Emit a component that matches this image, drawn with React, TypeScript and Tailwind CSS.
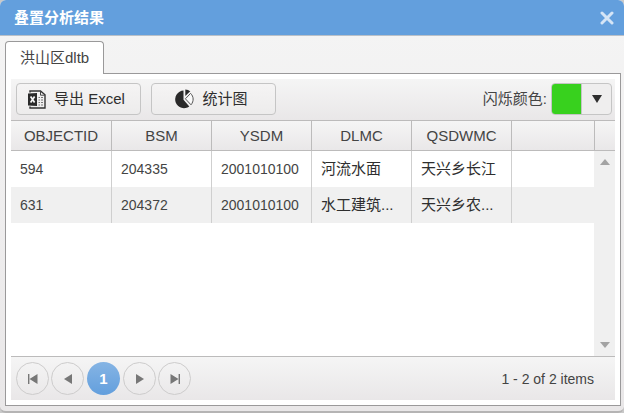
import { useState } from "react";

const columns = ["OBJECTID", "BSM", "YSDM", "DLMC", "QSDWMC"];

const rows = [
  ["594", "204335", "2001010100", "河流水面", "天兴乡长江"],
  ["631", "204372", "2001010100", "水工建筑...", "天兴乡农..."],
];

const pagerButton =
  "flex h-[33px] w-[33px] items-center justify-center rounded-full border border-[#cdcccc] text-[#777]";

const toolButton =
  "flex h-8 w-[125px] items-center justify-center gap-2 rounded border border-[#c5c5c5] bg-gradient-to-b from-[#f5f4f4] to-[#edecec] pr-1 text-[#2e2e2e]";

function ExcelIcon() {
  return (
    <svg width="18" height="19" viewBox="0 0 18 19" fill="none" aria-hidden="true">
      <path d="M2 2.5V1h10.5L17 4.8V18H2v-1.5" stroke="#333" strokeWidth="1.4" />
      <path d="M12.5 1v4.2H17" stroke="#444" />
      <path d="M0 3.5l9-.5v13l-9-.5z" fill="#2a2a2a" />
      <path d="M2.6 6.5l4 6M6.6 6.5l-4 6" stroke="#f5f5f5" strokeWidth="1.7" />
      <path d="M10.5 7.5H12M13 7.5h2M10.5 10H12M13 10h2M10.5 12.5H12M13 12.5h2M10.5 15H12M13 15h2" stroke="#777" />
    </svg>
  );
}

function PieIcon() {
  return (
    <svg width="19" height="20" viewBox="0 0 19 20" aria-hidden="true">
      <path d="M8.5 1.6v9.2l5.8 6.6A8.8 8.8 0 1 1 8.5 1.6z" fill="#2a2a2a" />
      <path d="M10.3 7V.4c2 .1 3.7.8 5 1.9z" fill="#2a2a2a" />
      <path d="M10.4 9.8l5.2-5.4c3.2 3.2 3.4 7.8.4 11.4z" fill="#fafafa" stroke="#555" />
    </svg>
  );
}

export default function App() {
  const [open, setOpen] = useState(true);

  if (!open) return null;

  return (
    <div className="bg-[#c9c9c9] font-['Liberation_Sans','Noto_Sans_CJK_SC',sans-serif] text-[15px] leading-5 text-[#444]">
      <section className="overflow-hidden rounded-md border-b-2 border-[#b5b4b4] bg-gradient-to-b from-[#f5f5f5] to-[#e9e7e8]">
        <header className="flex h-9 items-center justify-between border-b border-[#b9c0c8] bg-[#639fdd] pr-2.5 pl-3.5 text-white">
          <h1 className="font-bold">叠置分析结果</h1>
          <button type="button" aria-label="Close" onClick={() => setOpen(false)} className="text-[#d5e5f6]">
            <svg width="14" height="14" viewBox="0 0 14 14" aria-hidden="true">
              <path d="M2 2l10 10M12 2L2 12" stroke="currentColor" strokeWidth="3" strokeLinecap="round" />
            </svg>
          </button>
        </header>

        <div className="pt-[5px] pr-[3px] pb-[5px] pl-[5px]">
          {/* tabs */}
          <div role="tablist" className="flex">
            <button
              type="button"
              role="tab"
              aria-selected="true"
              className="relative -mb-px h-[33px] rounded-t border border-b-0 border-[#9a999a] bg-white px-3.5"
            >
              洪山区dltb
            </button>
          </div>

          <div role="tabpanel" className="border border-[#9a999a] bg-white p-[5px]">
            {/* toolbar */}
            <div className="flex h-[41px] items-start justify-between bg-gradient-to-b from-[#f5f5f5] to-[#e9e7e8] pt-1 pr-[3px] pl-[5px]">
              <div className="flex gap-2.5">
                <button type="button" className={toolButton}>
                  <ExcelIcon />
                  <span>导出 Excel</span>
                </button>
                <button type="button" className={toolButton}>
                  <PieIcon />
                  <span>统计图</span>
                </button>
              </div>
              <div className="flex items-center gap-1">
                <label htmlFor="flash-color">闪烁颜色:</label>
                <button
                  id="flash-color"
                  type="button"
                  className="flex h-8 w-[61px] overflow-hidden rounded border border-[#c5c5c5] bg-[#efeeee]"
                >
                  <span className="h-full w-[30px] border-r border-[#c5c5c5] bg-[#38d11e]" />
                  <span className="flex h-full flex-1 items-center justify-center">
                    <svg width="10" height="8" viewBox="0 0 10 8" aria-hidden="true">
                      <path d="M0 0h10L5 8z" fill="#2e2e2e" />
                    </svg>
                  </span>
                </button>
              </div>
            </div>

            {/* grid */}
            <div className="relative min-h-[236px] border-t border-[#bcbbbb]">
              <table className="w-full table-fixed border-separate border-spacing-0">
                <colgroup>
                  <col className="w-[101px]" />
                  <col className="w-[100px]" />
                  <col className="w-[100px]" />
                  <col className="w-[100px]" />
                  <col className="w-[100px]" />
                  <col />
                  <col className="w-[20px]" />
                </colgroup>
                <thead>
                  <tr className="h-[30px] bg-gradient-to-b from-[#f5f5f5] to-[#e9e7e8]">
                    {columns.map((name) => (
                      <th key={name} scope="col" className="border-r border-b border-[#bcbbbb] p-0 font-normal">
                        {name}
                      </th>
                    ))}
                    <td className="border-r border-b border-[#bcbbbb] p-0" />
                    <td className="border-b border-[#bcbbbb] p-0" />
                  </tr>
                </thead>
                <tbody>
                  {rows.map((row) => (
                    <tr key={row[0]} className="h-9 even:bg-[#f0f0f0]">
                      {row.map((cell, i) => (
                        <td
                          key={i}
                          className={`overflow-hidden border-r border-[#cfcfcf] py-0 pr-0 pl-[9px] whitespace-nowrap ${
                            i < 3 ? "text-sm" : "text-[#2e2e2e]"
                          }`}
                        >
                          {cell}
                        </td>
                      ))}
                      <td className="p-0" />
                      <td className="p-0" />
                    </tr>
                  ))}
                </tbody>
              </table>

              {/* scrollbar track */}
              <div className="absolute top-[30px] right-0 bottom-0 flex w-[21px] flex-col items-center justify-between bg-[#f0f0f0] py-2">
                <svg width="10" height="6" viewBox="0 0 10 6" aria-hidden="true">
                  <path d="M5 0l5 6H0z" fill="#a3a3a3" />
                </svg>
                <svg width="10" height="6" viewBox="0 0 10 6" aria-hidden="true">
                  <path d="M0 0h10L5 6z" fill="#a3a3a3" />
                </svg>
              </div>
            </div>

            {/* pager */}
            <div className="flex h-11 items-center justify-between border-t border-[#bcbbbb] bg-gradient-to-b from-[#f5f5f5] to-[#e9e7e8] pr-[21px] pl-[5px]">
              <nav aria-label="Pager" className="flex gap-0.5">
                <button type="button" aria-label="First page" className={pagerButton}>
                  <svg width="10" height="10" viewBox="0 0 10 10" fill="currentColor" aria-hidden="true">
                    <path d="M0 0h1.4v10H0zM9.5 0v10L1.5 5z" />
                  </svg>
                </button>
                <button type="button" aria-label="Previous page" className={pagerButton}>
                  <svg width="8" height="10" viewBox="0 0 8 10" fill="currentColor" aria-hidden="true">
                    <path d="M8 0v10L0 5z" />
                  </svg>
                </button>
                <button
                  type="button"
                  aria-current="page"
                  className="mx-px h-[33px] w-[33px] rounded-full bg-gradient-to-b from-[#85b4e4] to-[#639fdd] font-bold text-white"
                >
                  1
                </button>
                <button type="button" aria-label="Next page" className={pagerButton}>
                  <svg width="8" height="10" viewBox="0 0 8 10" fill="currentColor" aria-hidden="true">
                    <path d="M0 0l8 5-8 5z" />
                  </svg>
                </button>
                <button type="button" aria-label="Last page" className={pagerButton}>
                  <svg width="10" height="10" viewBox="0 0 10 10" fill="currentColor" aria-hidden="true">
                    <path d="M.5 0l8 5-8 5zM8.6 0H10v10H8.6z" />
                  </svg>
                </button>
              </nav>
              <span className="text-sm">1 - 2 of 2 items</span>
            </div>
          </div>
        </div>
      </section>
    </div>
  );
}
